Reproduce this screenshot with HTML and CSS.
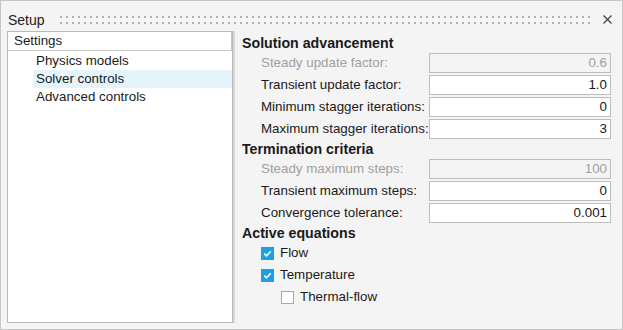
FILE: index.html
```html
<!DOCTYPE html>
<html>
<head>
<meta charset="utf-8">
<link rel="stylesheet" href="styles.css">
</head>
<body>
<div class="window">
  <div class="titlebar">
    <span class="title">Setup</span>
    <div class="grip"></div>
    <svg class="close" width="9" height="9" viewBox="0 0 9 9"><path d="M0.5 0.5L8.5 8.5M8.5 0.5L0.5 8.5" stroke="#3a3a3a" stroke-width="1.1" fill="none"/></svg>
  </div>
  <div class="body">
    <div class="tree">
      <div class="tree-header">Settings</div>
      <div class="tree-list">
        <div class="tree-item">Physics models</div>
        <div class="tree-item selected">Solver controls</div>
        <div class="tree-item">Advanced controls</div>
      </div>
    </div>
    <div class="splitter"></div>
    <div class="panel">
      <div class="heading">Solution advancement</div>
      <div class="rows">
        <div class="label disabled">Steady update factor:</div>
        <div class="field disabled">0.6</div>
        <div class="label">Transient update factor:</div>
        <div class="field">1.0</div>
        <div class="label">Minimum stagger iterations:</div>
        <div class="field">0</div>
        <div class="label">Maximum stagger iterations:</div>
        <div class="field">3</div>
      </div>
      <div class="heading">Termination criteria</div>
      <div class="rows">
        <div class="label disabled">Steady maximum steps:</div>
        <div class="field disabled">100</div>
        <div class="label">Transient maximum steps:</div>
        <div class="field">0</div>
        <div class="label">Convergence tolerance:</div>
        <div class="field">0.001</div>
      </div>
      <div class="heading">Active equations</div>
      <div class="checks">
        <div class="check"><span class="box checked"><svg width="13" height="13" viewBox="0 0 13 13"><path d="M3.2 6.6L5.5 8.8L9.8 4.2" stroke="#fff" stroke-width="1.6" fill="none"/></svg></span>Flow</div>
        <div class="check"><span class="box checked"><svg width="13" height="13" viewBox="0 0 13 13"><path d="M3.2 6.6L5.5 8.8L9.8 4.2" stroke="#fff" stroke-width="1.6" fill="none"/></svg></span>Temperature</div>
        <div class="check sub"><span class="box"></span>Thermal-flow</div>
      </div>
    </div>
  </div>
</div>
</body>
</html>
```

FILE: styles.css
```css
html, body {
  margin: 0;
  padding: 0;
}
body {
  font-family: "Liberation Sans", Arial, sans-serif;
  font-size: 13.35px;
  color: #1a1a1a;
}
.window {
  width: 623px;
  height: 330px;
  box-sizing: border-box;
  border: 1px solid #c6c6c6;
  background: #f4f4f4;
  display: flex;
  flex-direction: column;
}
.titlebar {
  height: 30px;
  box-sizing: border-box;
  padding: 8px 10px 0 7px;
  display: flex;
  align-items: center;
}
.title {
  font-size: 14px;
  line-height: 18px;
  color: #222;
}
.grip {
  flex: 1;
  height: 8px;
  margin: 0 10px 0 15px;
  background:
    linear-gradient(90deg, transparent 2px, #f4f4f4 2px) 0 0 / 6px 100%,
    linear-gradient(transparent 2px, #f4f4f4 2px) 0 0 / 100% 6px,
    #b0b0b0;
}
.close {
  display: block;
  margin-top: -2px;
}
.body {
  flex: 1;
  display: flex;
  padding: 0 0 6px 6px;
  min-height: 0;
}
.tree {
  width: 227px;
  box-sizing: border-box;
  border: 1px solid #bababa;
  background: #fff;
}
.tree-header {
  height: 18px;
  line-height: 18px;
  padding-left: 6px;
  border-bottom: 1px solid #c8c8c8;
  border-right: 1px solid #c8c8c8;
}
.tree-list {
  padding-top: 1px;
}
.tree-item {
  line-height: 18px;
  margin-left: 25px;
  padding-left: 3px;
}
.tree-item.selected {
  background: #e5f3fb;
}
.splitter {
  width: 2px;
  background: #d8d8d8;
}
.panel {
  flex: 1;
  padding: 2px 11px 0 7px;
}
.heading {
  font-weight: bold;
  font-size: 14.2px;
  line-height: 20px;
  height: 20px;
}
.rows {
  display: grid;
  grid-template-columns: 187px 182px;
  grid-auto-rows: 20px;
  row-gap: 2px;
}
.label {
  padding-left: 19px;
  line-height: 20px;
  white-space: nowrap;
}
.label.disabled {
  color: #a0a0a0;
}
.field {
  box-sizing: border-box;
  height: 20px;
  line-height: 18px;
  border: 1px solid #bdbdbd;
  background: #fff;
  text-align: right;
  padding-right: 3px;
}
.field.disabled {
  background: #f4f4f4;
  color: #a0a0a0;
}
.checks {
  display: flex;
  flex-direction: column;
  gap: 2px;
}
.check {
  height: 20px;
  line-height: 20px;
  display: flex;
  align-items: center;
  padding-left: 19px;
}
.check.sub {
  padding-left: 39px;
}
.box {
  width: 13px;
  height: 13px;
  box-sizing: border-box;
  border: 1px solid #a8a8a8;
  background: #fff;
  margin-right: 6px;
  display: block;
}
.box.checked {
  background: #1ba1e2;
  border-color: #1ba1e2;
}
.box svg {
  display: block;
  margin: -1px;
}
```
